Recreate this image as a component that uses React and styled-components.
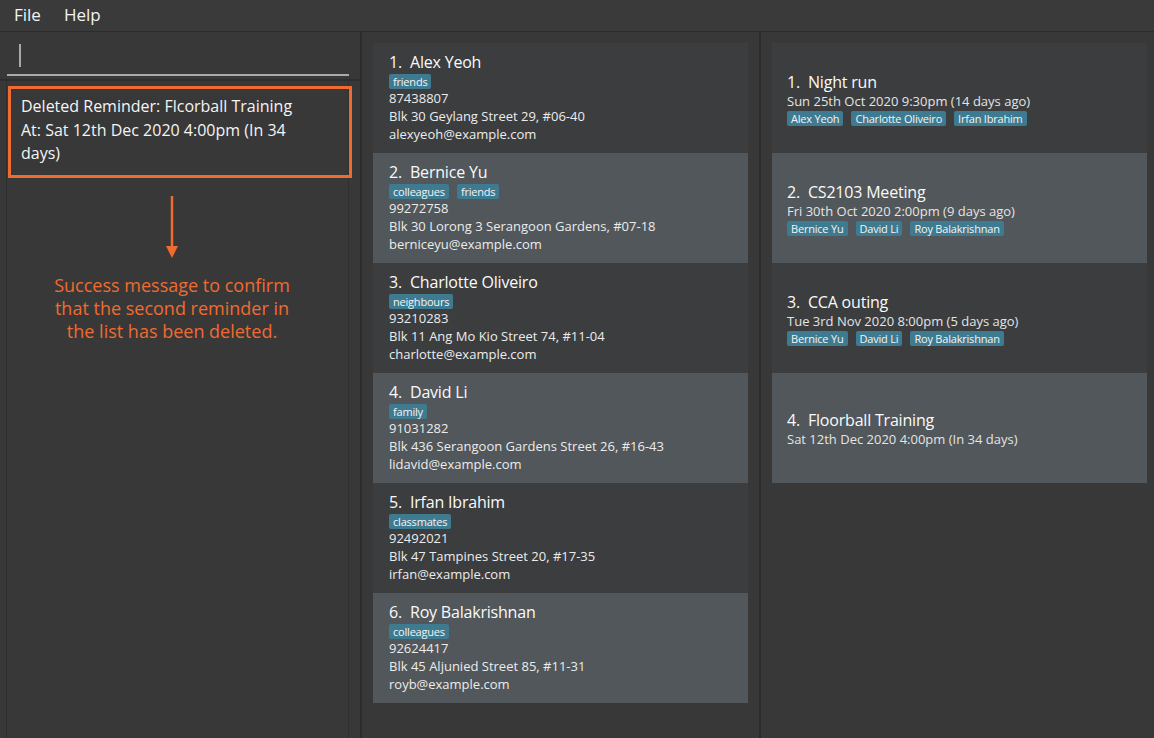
import React from "react";
import styled, { createGlobalStyle } from "styled-components";

const GlobalStyle = createGlobalStyle`
  html, body {
    margin: 0;
    padding: 0;
    background: #383838;
    overflow: hidden;
  }
  * {
    box-sizing: border-box;
  }
`;

const FONT = `"Open Sans", "Noto Sans", sans-serif`;

const Window = styled.div`
  width: 1154px;
  height: 738px;
  display: flex;
  flex-direction: column;
  background: #383838;
  font-family: ${FONT};
  color: #fff;
`;

const MenuBar = styled.div`
  height: 32px;
  display: flex;
  align-items: center;
  gap: 23px;
  padding: 0 0 2px 14px;
  border-bottom: 1px solid #2c2c2c;
  background: #3a3a3a;
`;

const MenuItem = styled.span`
  font-size: 17px;
  color: #f2f2f2;
`;

const Main = styled.div`
  flex: 1;
  display: flex;
  min-height: 0;
`;

const LeftPane = styled.div`
  width: 362px;
  display: flex;
  flex-direction: column;
  border-right: 2px solid #2c2c2c;
`;

const CommandBox = styled.div`
  height: 49px;
  padding: 11px 11px 0 7px;
  border-bottom: 2px solid #2e2e2e;
`;

const CommandInput = styled.div`
  height: 33px;
  border-bottom: 2px solid #a9a9a9;
  padding: 1px 0 0 12px;
`;

const Caret = styled.div`
  width: 2px;
  height: 23px;
  background: #a8a8a8;
`;

const ResultArea = styled.div`
  flex: 1;
  margin: 0 11px 0 6px;
  border-left: 1px solid #2f2f2f;
  border-right: 1px solid #2f2f2f;
  position: relative;
`;

const Highlight = styled.div`
  position: absolute;
  left: 1px;
  top: 5px;
  width: 344px;
  height: 92px;
  border: 3px solid #ef6b30;
  padding: 6px 28px 0 10px;
  font-size: 16px;
  line-height: 23.5px;
  color: #f4f4f4;
`;

const Note = styled.div`
  position: absolute;
  left: 0;
  top: 115px;
  width: 330px;
  display: flex;
  flex-direction: column;
  align-items: center;
  color: #ef6b30;
`;

const NoteText = styled.div`
  margin-top: 16px;
  font-size: 18px;
  line-height: 23px;
  text-align: center;
  width: 262px;
`;

const ListPane = styled.div`
  width: ${(p) => p.$width};
  flex: ${(p) => (p.$grow ? 1 : "none")};
  padding: 11px ${(p) => p.$right}px 0 ${(p) => p.$left}px;
  border-right: ${(p) => (p.$grow ? "none" : "2px solid #2c2c2c")};
`;

const Card = styled.div`
  width: 375px;
  height: 110px;
  background: ${(p) => (p.$alt ? "#51575a" : "#3b3d3f")};
`;

const PersonCard = styled(Card)`
  padding: 8px 0 0 16px;
`;

const ReminderCard = styled(Card)`
  display: flex;
  flex-direction: column;
  justify-content: center;
  padding-left: 15px;
`;

const Title = styled.div`
  font-size: 16px;
  line-height: 22px;
  color: #fafafa;
  letter-spacing: -0.2px;
`;

const Index = styled.span`
  margin-right: 8px;
`;

const Tags = styled.div`
  display: flex;
  gap: 8px;
  margin-top: ${(p) => p.$top}px;
`;

const Tag = styled.span`
  height: 15px;
  line-height: 15px;
  padding: 0 4px;
  font-size: 11px;
  background: #3e7b91;
  color: #f4f4f4;
  border-radius: 2px;
  letter-spacing: -0.2px;
`;

const Detail = styled.div`
  font-size: 13px;
  line-height: 18px;
  color: #ececec;
`;

const DateLine = styled.div`
  font-size: 13px;
  line-height: 16px;
  color: #e4e4e4;
`;

const persons = [
  { name: "Alex Yeoh", tags: ["friends"], phone: "87438807", address: "Blk 30 Geylang Street 29, #06-40", email: "alexyeoh@example.com" },
  { name: "Bernice Yu", tags: ["colleagues", "friends"], phone: "99272758", address: "Blk 30 Lorong 3 Serangoon Gardens, #07-18", email: "berniceyu@example.com" },
  { name: "Charlotte Oliveiro", tags: ["neighbours"], phone: "93210283", address: "Blk 11 Ang Mo Kio Street 74, #11-04", email: "charlotte@example.com" },
  { name: "David Li", tags: ["family"], phone: "91031282", address: "Blk 436 Serangoon Gardens Street 26, #16-43", email: "lidavid@example.com" },
  { name: "Irfan Ibrahim", tags: ["classmates"], phone: "92492021", address: "Blk 47 Tampines Street 20, #17-35", email: "irfan@example.com" },
  { name: "Roy Balakrishnan", tags: ["colleagues"], phone: "92624417", address: "Blk 45 Aljunied Street 85, #11-31", email: "royb@example.com" },
];

const reminders = [
  { title: "Night run", date: "Sun 25th Oct 2020 9:30pm (14 days ago)", tags: ["Alex Yeoh", "Charlotte Oliveiro", "Irfan Ibrahim"] },
  { title: "CS2103 Meeting", date: "Fri 30th Oct 2020 2:00pm (9 days ago)", tags: ["Bernice Yu", "David Li", "Roy Balakrishnan"] },
  { title: "CCA outing", date: "Tue 3rd Nov 2020 8:00pm (5 days ago)", tags: ["Bernice Yu", "David Li", "Roy Balakrishnan"] },
  { title: "Floorball Training", date: "Sat 12th Dec 2020 4:00pm (In 34 days)", tags: [] },
];

function Arrow() {
  return (
    <svg width="12" height="62" viewBox="0 0 12 62">
      <line x1="6" y1="0" x2="6" y2="52" stroke="#ef6b30" strokeWidth="2.5" />
      <polygon points="0,50 12,50 6,62" fill="#ef6b30" />
    </svg>
  );
}

export default function App() {
  return (
    <Window>
      <GlobalStyle />
      <MenuBar>
        <MenuItem>File</MenuItem>
        <MenuItem>Help</MenuItem>
      </MenuBar>
      <Main>
        <LeftPane>
          <CommandBox>
            <CommandInput>
              <Caret />
            </CommandInput>
          </CommandBox>
          <ResultArea>
            <Highlight>
              Deleted Reminder: Flcorball Training
              <br />
              At: Sat 12th Dec 2020 4:00pm (In 34 days)
            </Highlight>
            <Note>
              <Arrow />
              <NoteText>
                Success message to confirm that the second reminder in the list has been deleted.
              </NoteText>
            </Note>
          </ResultArea>
        </LeftPane>
        <ListPane $width="399px" $left={11} $right={12}>
          {persons.map((p, i) => (
            <PersonCard key={p.name} $alt={i % 2 === 1}>
              <Title>
                <Index>{i + 1}.</Index>
                {p.name}
              </Title>
              <Tags $top={1}>
                {p.tags.map((t) => (
                  <Tag key={t}>{t}</Tag>
                ))}
              </Tags>
              <Detail>{p.phone}</Detail>
              <Detail>{p.address}</Detail>
              <Detail>{p.email}</Detail>
            </PersonCard>
          ))}
        </ListPane>
        <ListPane $grow $left={11} $right={7}>
          {reminders.map((r, i) => (
            <ReminderCard key={r.title} $alt={i % 2 === 1}>
              <Title>
                <Index>{i + 1}.</Index>
                {r.title}
              </Title>
              <DateLine>{r.date}</DateLine>
              {r.tags.length > 0 && (
                <Tags $top={2}>
                  {r.tags.map((t) => (
                    <Tag key={t}>{t}</Tag>
                  ))}
                </Tags>
              )}
            </ReminderCard>
          ))}
        </ListPane>
      </Main>
    </Window>
  );
}
